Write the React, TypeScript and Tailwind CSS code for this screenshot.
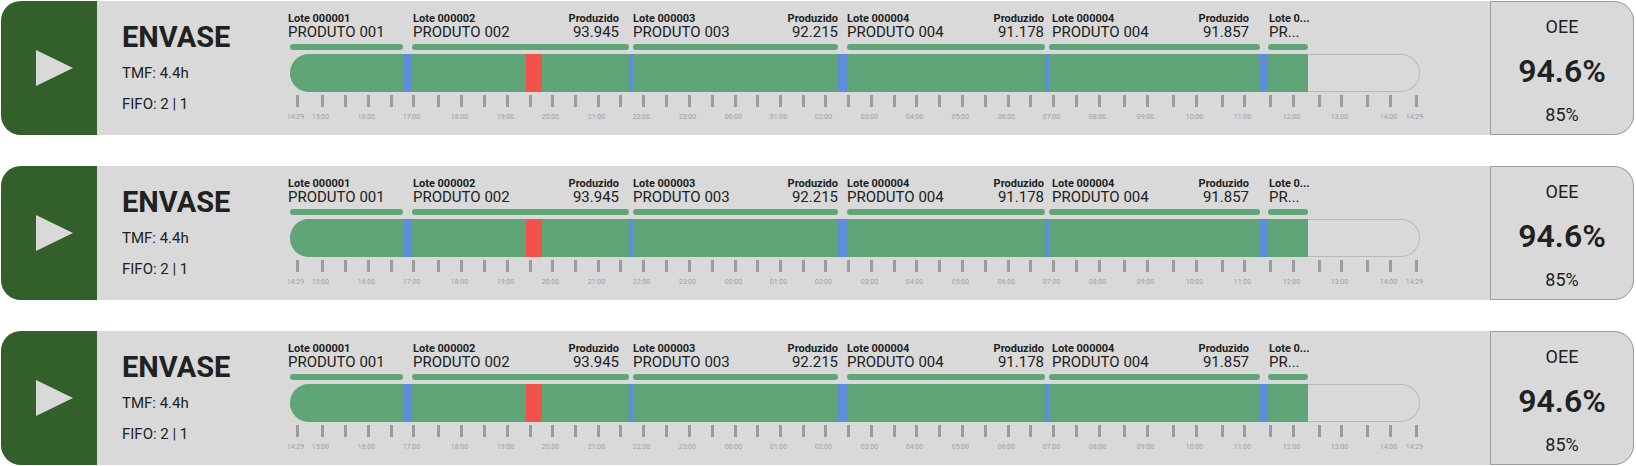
type Segment = { span: number; color: string };
type Lot = { lot: string; product: string; produced?: string; area: string };
type Tick = { gap: number; label?: string };

const segments: Segment[] = [
  { span: 113, color: "bg-[#5fa578]" },
  { span: 9, color: "bg-[#5f8ddb]" },
  { span: 114, color: "bg-[#5fa578]" },
  { span: 16, color: "bg-[#ef534b]" },
  { span: 87, color: "bg-[#5fa578]" },
  { span: 4, color: "bg-[#5f8ddb]" },
  { span: 205, color: "bg-[#5fa578]" },
  { span: 9, color: "bg-[#5f8ddb]" },
  { span: 198, color: "bg-[#5fa578]" },
  { span: 4, color: "bg-[#5f8ddb]" },
  { span: 211, color: "bg-[#5fa578]" },
  { span: 8, color: "bg-[#5f8ddb]" },
  { span: 40, color: "bg-[#5fa578]" },
  { span: 112, color: "bg-transparent" },
];

const lots: Lot[] = [
  { lot: "Lote 000001", product: "PRODUTO 001", area: "col-start-1" },
  { lot: "Lote 000002", product: "PRODUTO 002", produced: "93.945", area: "col-start-3" },
  { lot: "Lote 000003", product: "PRODUTO 003", produced: "92.215", area: "col-start-5" },
  { lot: "Lote 000004", product: "PRODUTO 004", produced: "91.178", area: "col-start-7" },
  { lot: "Lote 000004", product: "PRODUTO 004", produced: "91.857", area: "col-start-9" },
  { lot: "Lote 0...", product: "PR...", area: "col-start-11" },
];

const ticks: Tick[] = [
  { gap: 25, label: "14:29" },
  { gap: 23, label: "15:00" },
  { gap: 23 },
  { gap: 23, label: "16:00" },
  { gap: 22 },
  { gap: 25, label: "17:00" },
  { gap: 23 },
  { gap: 23, label: "18:00" },
  { gap: 23 },
  { gap: 23, label: "19:00" },
  { gap: 22 },
  { gap: 23, label: "20:00" },
  { gap: 23 },
  { gap: 22, label: "21:00" },
  { gap: 23 },
  { gap: 23, label: "22:00" },
  { gap: 23 },
  { gap: 23, label: "23:00" },
  { gap: 23 },
  { gap: 22, label: "00:00" },
  { gap: 23 },
  { gap: 23, label: "01:00" },
  { gap: 22 },
  { gap: 23, label: "02:00" },
  { gap: 23 },
  { gap: 23, label: "03:00" },
  { gap: 22 },
  { gap: 23, label: "04:00" },
  { gap: 23 },
  { gap: 23, label: "05:00" },
  { gap: 23 },
  { gap: 22, label: "06:00" },
  { gap: 23 },
  { gap: 23, label: "07:00" },
  { gap: 23 },
  { gap: 25, label: "08:00" },
  { gap: 23 },
  { gap: 26, label: "09:00" },
  { gap: 23 },
  { gap: 26, label: "10:00" },
  { gap: 22 },
  { gap: 26, label: "11:00" },
  { gap: 23 },
  { gap: 26, label: "12:00" },
  { gap: 22 },
  { gap: 26, label: "13:00" },
  { gap: 23 },
  { gap: 26, label: "14:00" },
  { gap: 0, label: "14:29" },
];

const columns = (spans: number[]) => spans.map((s) => `minmax(0, ${s}fr)`).join(" ");

function Timeline() {
  return (
    <div className="min-w-0 flex-1 pt-3">
      <div className="-ml-0.5 grid grid-cols-[115fr_10fr_206fr_14fr_205fr_9fr_197fr_8fr_197fr_20fr_40fr_111fr]">
        {lots.map((l, i) => (
          <div key={i} className={`row-start-1 flex min-w-0 justify-between whitespace-nowrap ${l.area}`}>
            <div>
              <p className="text-[11px] leading-[11px] font-bold">{l.lot}</p>
              <p className="text-[15px] leading-[16px]">{l.product}</p>
            </div>
            {l.produced && (
              <div className="text-right">
                <p className="text-[11px] leading-[11px] font-bold">Produzido</p>
                <p className="text-[15px] leading-[16px]">{l.produced}</p>
              </div>
            )}
          </div>
        ))}
      </div>
      <div className="mt-1 grid grid-cols-[113fr_9fr_217fr_4fr_205fr_9fr_198fr_4fr_211fr_8fr_40fr_112fr]">
        {lots.map((l, i) => (
          <div key={i} className={`row-start-1 h-[6px] rounded-full bg-[#5fa578] ${l.area}`} />
        ))}
      </div>
      <div
        className="mt-1 grid h-[38px] overflow-hidden rounded-full inset-ring inset-ring-[#b9b9b9]"
        style={{ gridTemplateColumns: columns(segments.map((s) => s.span)) }}
      >
        {segments.map((s, i) => (
          <div key={i} className={s.color} />
        ))}
      </div>
      <div
        className="mt-[3px] grid pr-1 pl-[7px]"
        style={{ gridTemplateColumns: columns(ticks.map((t) => t.gap)) }}
      >
        {ticks.map((t, i) => (
          <div key={i} className="flex w-0 flex-col items-center">
            <span className="h-3 w-[3px] shrink-0 bg-[#9b9b9b]" />
            {t.label && (
              <span className="mt-1 pr-[3px] text-[7px] leading-[12px] whitespace-nowrap text-[#a0a0a0]">{t.label}</span>
            )}
          </div>
        ))}
      </div>
    </div>
  );
}

function LineCard() {
  return (
    <section className="flex h-[134px] rounded-[20px] bg-[#d9d9d9] text-[#212121]">
      <div className="flex w-24 shrink-0 items-center justify-center rounded-l-[20px] bg-[#335f2a]">
        <svg className="ml-[11px] h-9 w-[37px] fill-[#d9d9d9]" viewBox="0 0 37 36" role="img" aria-label="Em produção">
          <path d="M0 0L37 18L0 36Z" />
        </svg>
      </div>
      <div className="w-[193px] shrink-0 pt-5 pl-[25px]">
        <h2 className="text-[29px] leading-[32px] font-bold">ENVASE</h2>
        <p className="mt-[11px] text-[15px] leading-[18px]">TMF: 4.4h</p>
        <p className="mt-[13px] text-[15px] leading-[18px]">FIFO: 2 | 1</p>
      </div>
      <Timeline />
      <div className="ml-[70px] flex w-36 shrink-0 flex-col items-center rounded-r-[20px] border border-[#9c9c9c] pt-[14px]">
        <p className="text-[18px] leading-[22px]">OEE</p>
        <p className="mt-[13px] text-[32px] leading-[40px] font-semibold">94.6%</p>
        <p className="mt-[13px] text-[18px] leading-[22px]">85%</p>
      </div>
    </section>
  );
}

export default function App() {
  return (
    <main className="flex min-h-screen flex-col gap-[31px] bg-white py-px pr-[2px] pl-px font-['Roboto',sans-serif]">
      <LineCard />
      <LineCard />
      <LineCard />
    </main>
  );
}
